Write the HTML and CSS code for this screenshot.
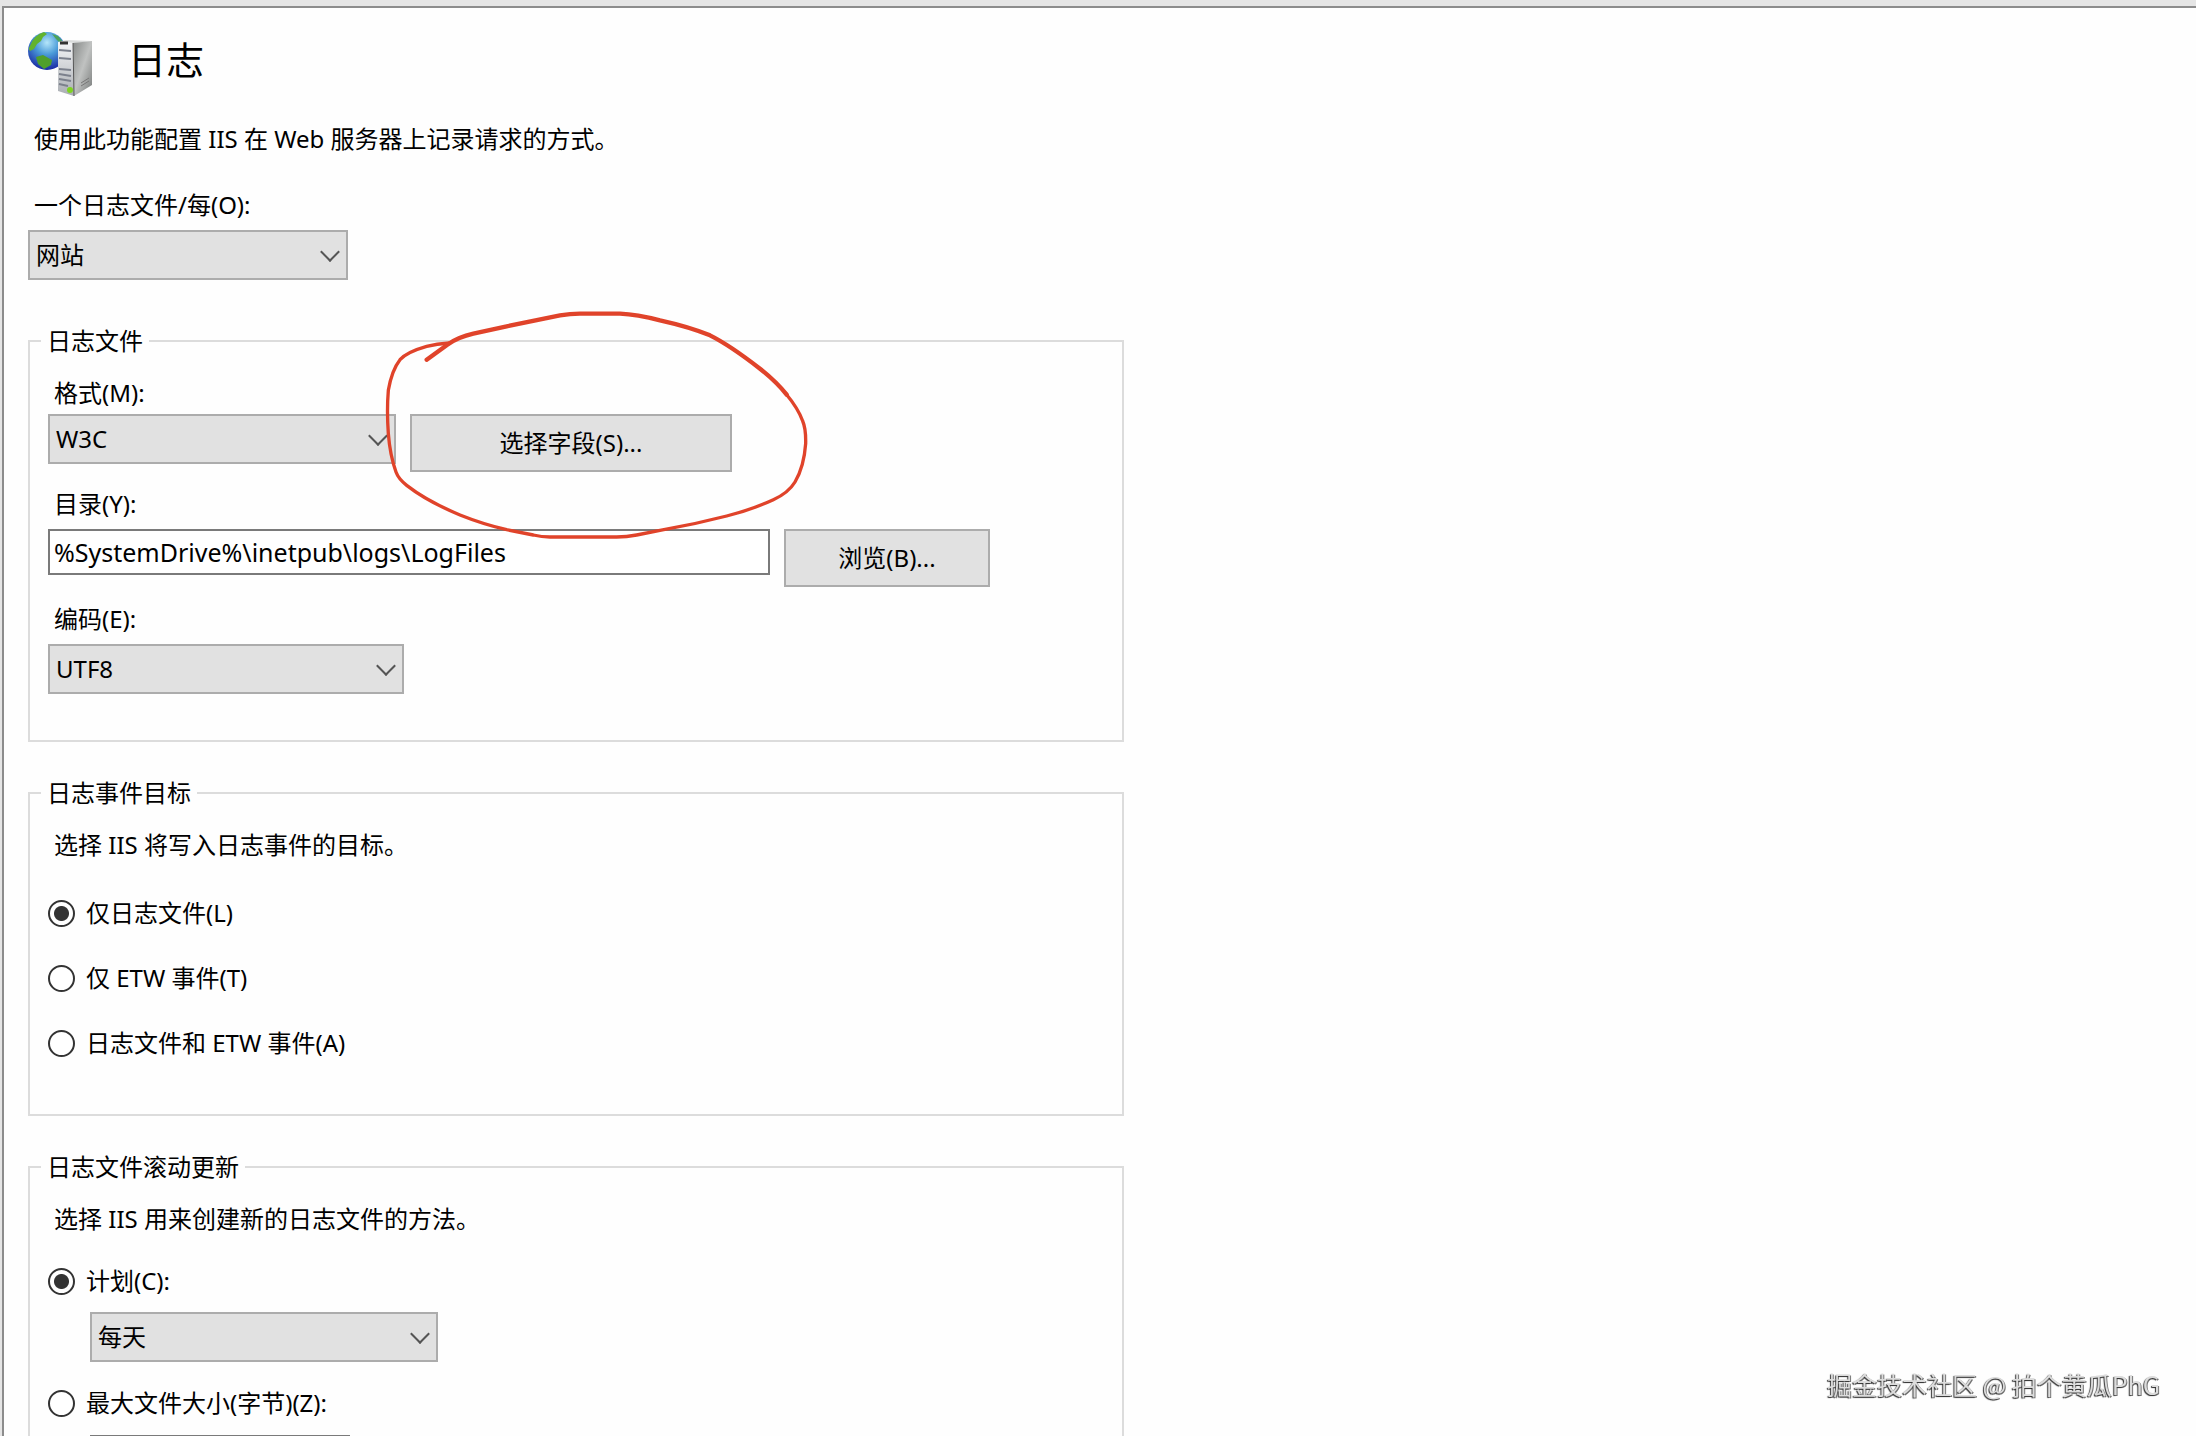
FILE: index.html
```
<!DOCTYPE html>
<html lang="zh-CN">
<head>
  <meta charset="UTF-8" />
  <meta name="viewport" content="width=device-width, initial-scale=1.0"/>
  <title>日志</title>
  <link rel="stylesheet" href="styles.css">
</head>
<body>

  <main class="panel">
    <header class="page-header">
      <svg class="page-icon" viewBox="0 0 66 66" aria-hidden="true">
        <defs>
          <radialGradient id="globe" cx="50%" cy="28%" r="70%">
            <stop offset="0" stop-color="#b4e6fa"/>
            <stop offset="0.45" stop-color="#4a9ad8"/>
            <stop offset="1" stop-color="#1c2fa6"/>
          </radialGradient>
          <linearGradient id="side" x1="0" y1="0" x2="1" y2="1">
            <stop offset="0" stop-color="#858887"/>
            <stop offset="0.5" stop-color="#c0c2c1"/>
            <stop offset="1" stop-color="#777a79"/>
          </linearGradient>
          <linearGradient id="front" x1="0" y1="0" x2="0" y2="1">
            <stop offset="0" stop-color="#f4f5f7"/>
            <stop offset="1" stop-color="#a9adb2"/>
          </linearGradient>
        </defs>
        <!-- globe -->
        <circle cx="19" cy="20" r="19" fill="url(#globe)"/>
        <path d="M2 15 Q6 4 16 1 L19 3 L15 6 L13 10 L9 13 L6 18 L2 20 Q0 18 2 15Z" fill="#62b32e"/>
        <path d="M24 3 L30 5 L35 11 L32 12 L28 8Z" fill="#4da35a"/>
        <path d="M8 26 L15 24 L24 29 L23 34 L16 38 L10 33Z" fill="#4f9f2c"/>
        <!-- server -->
        <path d="M30 11 L38 9 L64 10 L47 12Z" fill="#d9dbdb"/>
        <path d="M30 11 L45 12 L46 65 L30 60Z" fill="url(#front)"/>
        <path d="M45 12 L64 10 L64 54 L46 65Z" fill="url(#side)"/>
        <path d="M32 12 H40" stroke="#333" stroke-width="3"/>
        <path d="M31 19 L43 20 M31 27 L43 28 M31 38 L43 39 M31 43 L43 45 M31 48 L43 50 M31 53 L40 55" stroke="#7b808c" stroke-width="2" fill="none"/>
        <path d="M45 12 L46 65" stroke="#555" stroke-width="1"/>
        <path d="M53 52 L61 47 M53 55 L61 50" stroke="#777" stroke-width="1"/>
        <circle cx="42" cy="59" r="3" fill="#7ed321"/>
      </svg>
      <h1>日志</h1>
    </header>

    <p class="description">使用此功能配置 IIS 在 Web 服务器上记录请求的方式。</p>

    <label class="site-label" for="per-site">一个日志文件/每(O):</label>
    <div class="select-box site-select">
      <select id="per-site"><option>网站</option></select>
    </div>

    <fieldset>
      <legend>日志文件</legend>
      <label class="field-label first" for="format">格式(M):</label>
      <div class="field-row">
        <div class="select-box format-select">
          <select id="format"><option>W3C</option></select>
        </div>
        <button type="button" class="fields-button">选择字段(S)...</button>
      </div>
      <label class="field-label" for="directory">目录(Y):</label>
      <div class="field-row">
        <input type="text" class="text-input" id="directory" value="%SystemDrive%\inetpub\logs\LogFiles">
        <button type="button" class="browse-button">浏览(B)...</button>
      </div>
      <label class="field-label" for="encoding">编码(E):</label>
      <div class="select-box encoding-select">
        <select id="encoding"><option>UTF8</option></select>
      </div>
    </fieldset>

    <fieldset>
      <legend>日志事件目标</legend>
      <p class="hint">选择 IIS 将写入日志事件的目标。</p>
      <div class="radio-list">
        <label class="radio"><input type="radio" name="target" checked>仅日志文件(L)</label>
        <label class="radio"><input type="radio" name="target">仅 ETW 事件(T)</label>
        <label class="radio"><input type="radio" name="target">日志文件和 ETW 事件(A)</label>
      </div>
    </fieldset>

    <fieldset>
      <legend>日志文件滚动更新</legend>
      <p class="hint">选择 IIS 用来创建新的日志文件的方法。</p>
      <div class="rollover">
        <label class="radio"><input type="radio" name="rollover" checked>计划(C):</label>
        <div class="select-box schedule-select">
          <select id="schedule" aria-label="计划"><option>每天</option></select>
        </div>
        <label class="radio"><input type="radio" name="rollover">最大文件大小(字节)(Z):</label>
        <input type="text" class="text-input size-input" aria-label="最大文件大小">
      </div>
    </fieldset>

    <!-- hand-drawn circle round the field button -->
    <svg class="annotation" viewBox="60 50 1299 711" aria-hidden="true">
      <path class="thick" d="M200 208 L262 163 Q295 140 340 130 L440 108 L600 75 Q630 70 660 70 L780 70 Q830 72 900 90 Q990 110 1050 135 Q1110 165 1200 235 Q1250 275 1280 313"/>
      <path d="M1276 308 Q1315 355 1328 392 Q1338 415 1337 460 Q1332 530 1305 575 Q1285 608 1240 628 Q1170 660 1100 677 Q1000 703 900 720 L830 734 Q800 740 770 740 L570 740 Q545 740 520 734 L440 718 Q370 702 300 674 Q200 632 140 585 Q115 565 108 545 Q90 495 85 430 Q80 360 85 300 Q95 240 120 208 Q140 185 200 168 Q230 160 268 158"/>
    </svg>
  </main>

  <div class="watermark">掘金技术社区 @ 拍个黄瓜PhG</div>

</body>
</html>
```

FILE: styles.css
```
* {
  box-sizing: border-box;
}

body {
  margin: 0;
  height: 100vh;
  overflow: hidden;
  padding: 6px 0 0 2px;
  background-color: #e5e5e5;
  color: #000;
  font-family: "Noto Sans", "Noto Sans CJK SC", sans-serif;
  font-size: 24px;
  line-height: 34px;
}

.panel {
  position: relative;
  min-height: 100%;
  padding: 23px 24px 0;
  border-top: 2px solid #8c8c8c;
  border-left: 2px solid #8c8c8c;
  background-color: #fefefe;
}

.page-header {
  display: flex;
  align-items: flex-start;
  gap: 34px;
}

.page-icon {
  width: 66px;
  height: 66px;
}

h1 {
  margin: 0;
  font-size: 38px;
  font-weight: normal;
  line-height: 56px;
}

p {
  margin: 0;
}

.description {
  margin-top: 25px;
  padding-left: 6px;
}

label {
  display: block;
}

.site-label {
  margin: 32px 0 8px;
  padding-left: 6px;
}

/* form controls */
select,
input,
button {
  font: inherit;
  color: inherit;
  border-radius: 0;
}

.select-box {
  position: relative;
  height: 50px;
}

.select-box select {
  appearance: none;
  width: 100%;
  height: 100%;
  padding: 0 40px 0 6px;
  border: 2px solid #acacac;
  background-color: #e1e1e1;
}

.select-box::after {
  content: "";
  position: absolute;
  top: 15px;
  right: 11px;
  width: 12px;
  height: 12px;
  border-right: 2px solid #555;
  border-bottom: 2px solid #555;
  transform: rotate(45deg);
  pointer-events: none;
}

.site-select {
  width: 320px;
}

.format-select,
.schedule-select {
  width: 348px;
}

.encoding-select {
  width: 356px;
}

button {
  height: 58px;
  padding: 0;
  border: 2px solid #acacac;
  background-color: #e1e1e1;
}

.fields-button {
  width: 322px;
}

.browse-button {
  width: 206px;
}

.text-input {
  width: 722px;
  height: 46px;
  padding: 0 4px;
  border: 2px solid #7a7a7a;
  background-color: #fff;
  font-size: 25px;
}

/* groups */
fieldset {
  max-width: 1096px;
  margin: 34px 0 0;
  padding: 0 18px 46px;
  border: 2px solid #dcdcdc;
}

.site-select + fieldset {
  margin-top: 44px;
}

legend {
  margin-left: -7px;
  padding: 0 6px;
}

.field-label {
  margin: 15px 0 8px;
  padding-left: 6px;
}

.field-label.first {
  margin: 18px 0 4px;
}

.field-row {
  display: flex;
  align-items: flex-start;
  gap: 14px;
}

.hint {
  margin-top: 18px;
  padding-left: 6px;
}

.radio-list {
  display: grid;
  gap: 31px;
  margin: 34px 0 8px;
}

.radio {
  display: flex;
  align-items: center;
  gap: 11px;
}

.radio input {
  appearance: none;
  width: 27px;
  height: 27px;
  margin: 0;
  border: 2px solid #333;
  border-radius: 50%;
  background-color: #fff;
}

.radio input:checked {
  background-image: radial-gradient(circle, #333 7px, transparent 8px);
}

.rollover {
  margin-top: 28px;
}

.schedule-select {
  margin: 14px 0 24px 42px;
}

.size-input {
  width: 260px;
  margin: 15px 0 0 42px;
}

.annotation {
  position: absolute;
  top: 299px;
  left: 376px;
  width: 433px;
  height: 237px;
  fill: none;
  stroke: #e0432a;
  stroke-width: 10;
  stroke-linecap: round;
  stroke-linejoin: round;
  pointer-events: none;
}

.annotation .thick {
  stroke-width: 13;
}

.watermark {
  position: fixed;
  right: 36px;
  bottom: 35px;
  color: #dcdcdc;
  font-family: "Noto Sans CJK SC", sans-serif;
  font-size: 25px;
  text-shadow: -1px 1px 1px #333, 1px 1px 0 #777;
}
```
